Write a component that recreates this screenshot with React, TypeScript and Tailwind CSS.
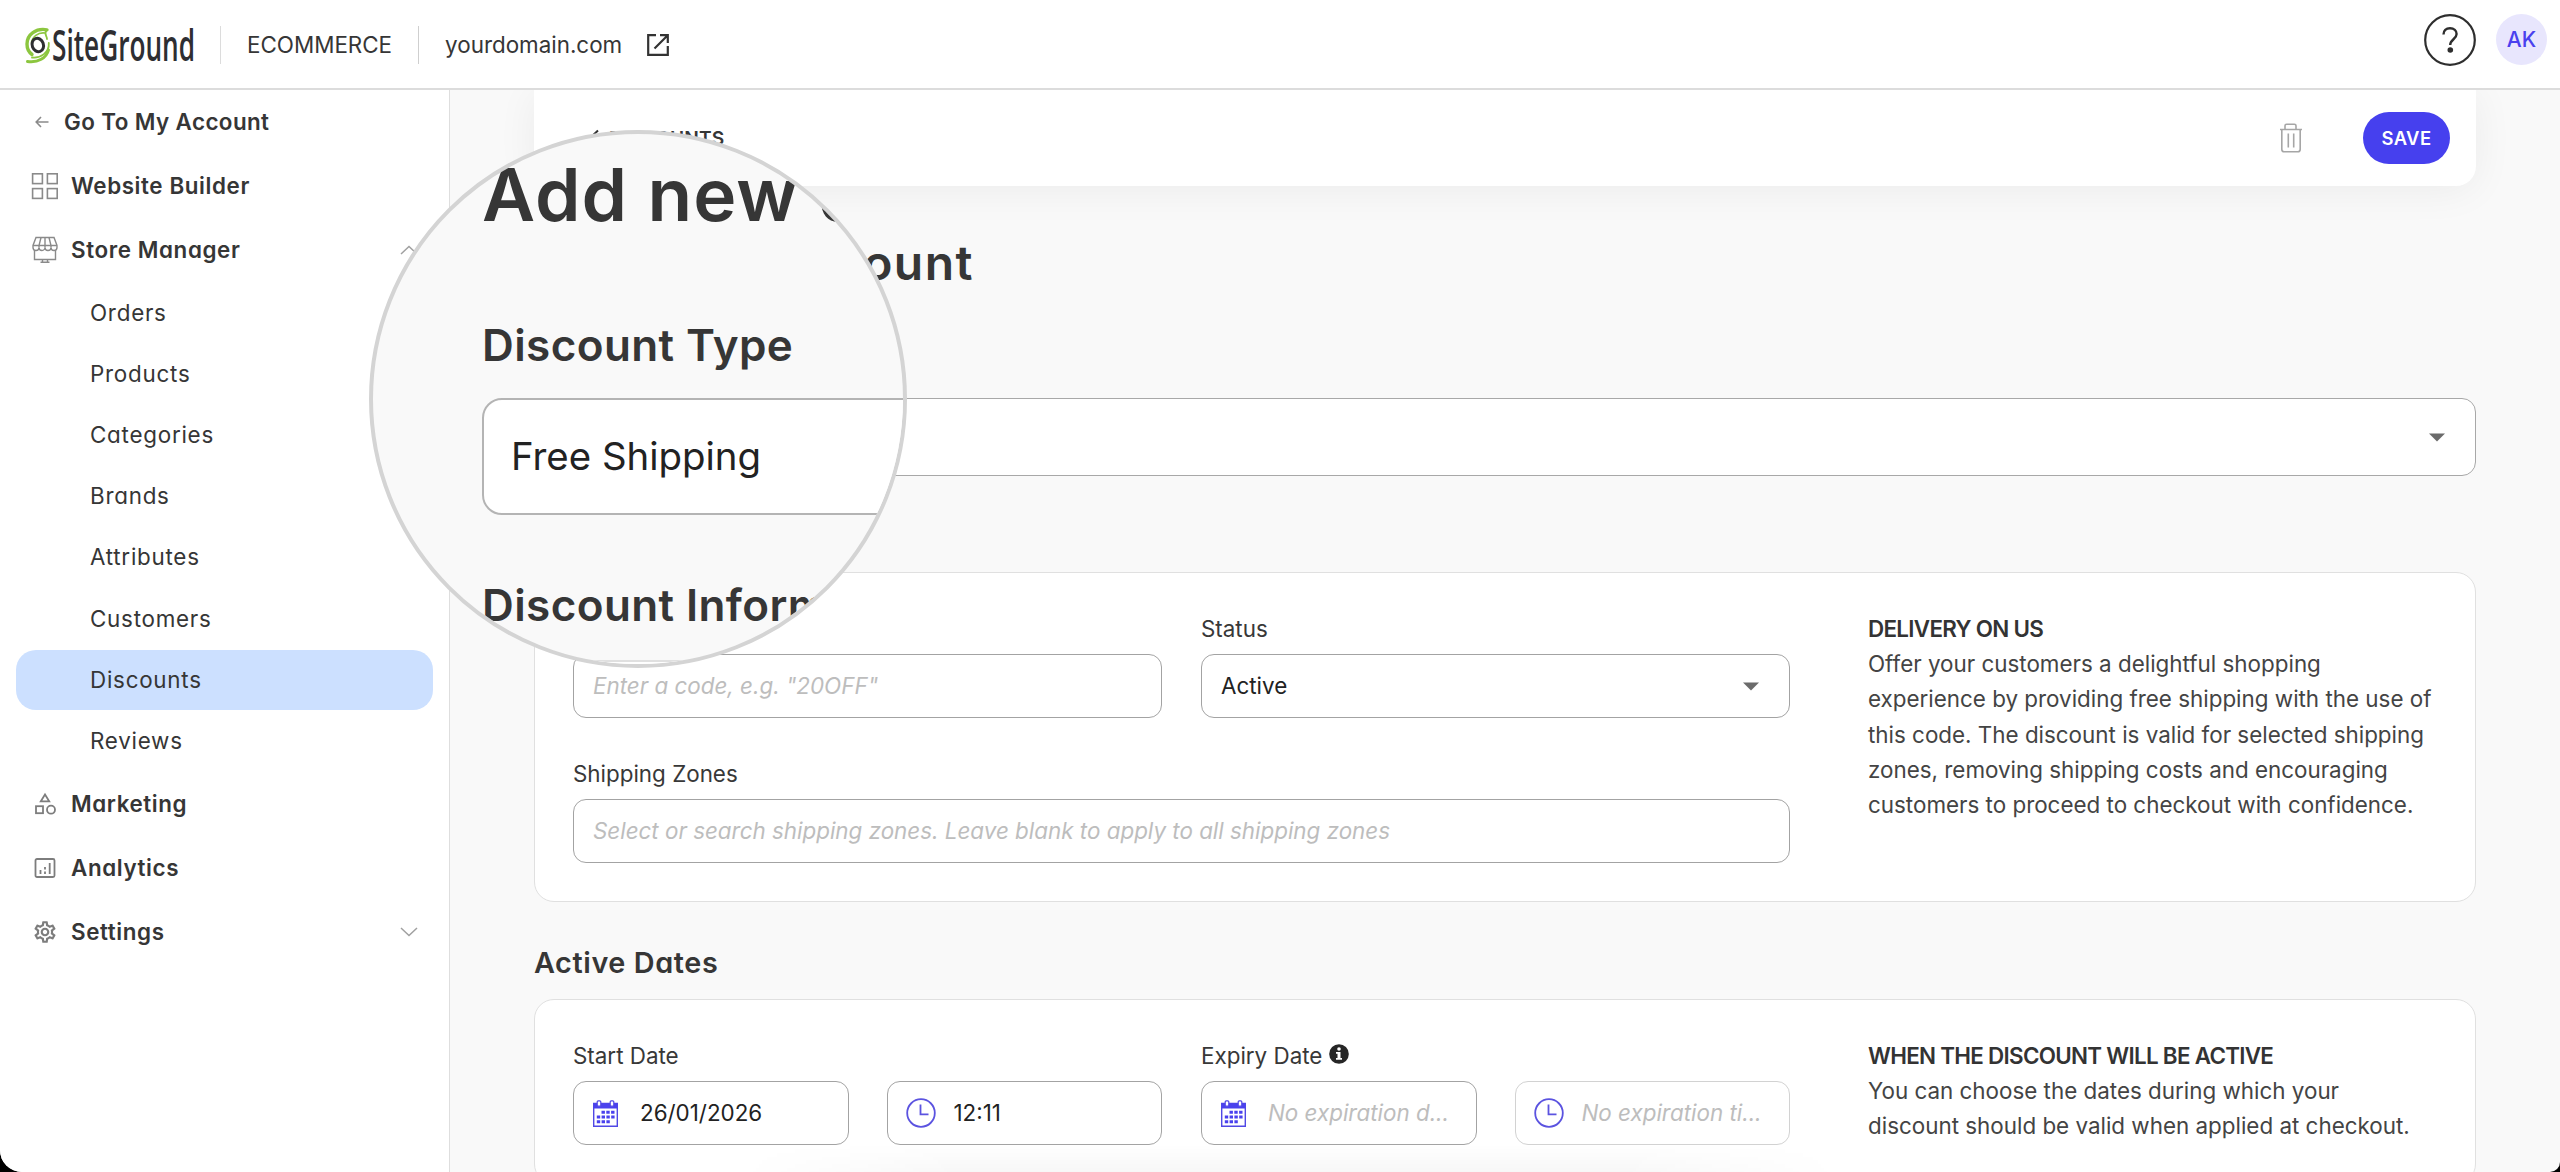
import type {ReactNode} from "react";
import {clsx} from "clsx";

const subItems = ['Orders', 'Products', 'Categories', 'Brands', 'Attributes', 'Customers', 'Discounts', 'Reviews']

function Logo() {
    return (
        <svg width="174" height="40" viewBox="0 0 174 40" fill="none" className="overflow-visible">
            <path d="M22 1.8C11 -0.2 2 6.5 2 16C2 20 3.5 24 7 26.5" stroke="#8cc63f" strokeWidth="3.4" strokeLinecap="round"/>
            <path d="M20 5C13 4 7 9 6.5 15" stroke="#8cc63f" strokeWidth="1.6" strokeLinecap="round"/>
            <path d="M21.5 2.5C18.5 5.5 22 8 22 11" stroke="#8cc63f" strokeWidth="1.8" strokeLinecap="round"/>
            <path d="M23.8 15C24.5 25 15 30.5 7 29.5" stroke="#8cc63f" strokeWidth="1.8" strokeLinecap="round"/>
            <path d="M23.5 22C21.5 30 13 35 2.5 33.5" stroke="#8cc63f" strokeWidth="3" strokeLinecap="round"/>
            <ellipse cx="12.8" cy="17" rx="5.6" ry="6.8" stroke="#2e2e32" strokeWidth="3" transform="rotate(-20 12.8 17)"/>
            <text x="27" y="33" fontFamily="'Open Sans', sans-serif" fontSize="43" fontWeight="600" fill="#2e2e32"
                  textLength="143" lengthAdjust="spacingAndGlyphs">SiteGround</text>
        </svg>
    )
}

function ExternalIcon() {
    return (
        <svg width="24" height="24" viewBox="0 0 24 24" fill="none" stroke="#333" strokeWidth="2.2">
            <path d="M10 2.2H2.2V21.8H21.8V13"/>
            <path d="M14 2.2H21.8V10M21.5 2.5L8.5 15.5"/>
        </svg>
    )
}

function BuilderIcon() {
    return (
        <svg width="28" height="28" viewBox="0 0 28 28" fill="none" stroke="#8a8a8a" strokeWidth="1.6">
            <rect x="1.6" y="1.8" width="9.8" height="9.8"/>
            <rect x="16.4" y="1.8" width="9.8" height="9.8"/>
            <rect x="1.6" y="16.6" width="9.8" height="9.8"/>
            <rect x="16.4" y="16.6" width="9.8" height="9.8"/>
        </svg>
    )
}

function StoreIcon() {
    return (
        <svg width="28" height="28" viewBox="0 0 28 28" fill="none" stroke="#8a8a8a" strokeWidth="1.4">
            <path d="M5 1.5H23L26 9.5V11.5A3 3 0 0 1 20 11.5A3 3 0 0 1 14 11.5A3 3 0 0 1 8 11.5A3 3 0 0 1 2 11.5V9.5Z"/>
            <path d="M2 9.5H26M10 1.5L8 9.5V11.5M14 1.5V11.5M18 1.5L20 9.5V11.5"/>
            <path d="M3.5 14V23.5H24.5V14M11.5 23.5V26M16.5 23.5V26M9.5 26.3H18.5"/>
        </svg>
    )
}

function MarketingIcon() {
    return (
        <svg width="28" height="28" viewBox="0 0 28 28" fill="none" stroke="#7d7d7d" strokeWidth="1.8">
            <path d="M14 4.5L18.2 11.3H9.8Z"/>
            <rect x="5" y="16.2" width="7" height="7"/>
            <circle cx="20" cy="19.7" r="4"/>
        </svg>
    )
}

function AnalyticsIcon() {
    return (
        <svg width="28" height="28" viewBox="0 0 28 28" fill="none" stroke="#7d7d7d" strokeWidth="1.8">
            <rect x="4.5" y="5" width="19" height="18" rx="1.5"/>
            <path d="M9.5 16V20M14 17.5V20M14 13V15.5M18.7 9V20"/>
        </svg>
    )
}

function SettingsIcon() {
    return (
        <svg width="26" height="26" viewBox="0 0 24 24" fill="#7d7d7d">
            <path
                d="M19.43 12.98c.04-.32.07-.64.07-.98 0-.34-.03-.66-.07-.98l2.11-1.65c.19-.15.24-.42.12-.64l-2-3.46c-.09-.16-.26-.25-.44-.25-.06 0-.12.01-.17.03l-2.49 1c-.52-.4-1.08-.73-1.69-.98l-.38-2.65C14.46 2.18 14.25 2 14 2h-4c-.25 0-.46.18-.49.42l-.38 2.65c-.61.25-1.17.59-1.69.98l-2.49-1c-.06-.02-.12-.03-.18-.03-.17 0-.34.09-.43.25l-2 3.46c-.13.22-.07.49.12.64l2.11 1.65c-.04.32-.07.65-.07.98 0 .33.03.66.07.98l-2.11 1.65c-.19.15-.24.42-.12.64l2 3.46c.09.16.26.25.44.25.06 0 .12-.01.17-.03l2.49-1c.52.4 1.08.73 1.69.98l.38 2.65c.03.24.24.42.49.42h4c.25 0 .46-.18.49-.42l.38-2.65c.61-.25 1.17-.59 1.69-.98l2.49 1c.06.02.12.03.18.03.17 0 .34-.09.43-.25l2-3.46c.12-.22.07-.49-.12-.64l-2.11-1.65zm-1.98-1.71c.04.31.05.52.05.73 0 .21-.02.43-.05.73l-.14 1.13.89.7 1.08.84-.7 1.21-1.27-.51-1.04-.42-.9.68c-.43.32-.84.56-1.25.73l-1.06.43-.16 1.13-.2 1.35h-1.4l-.19-1.35-.16-1.13-1.06-.43c-.43-.18-.83-.41-1.23-.71l-.91-.7-1.06.43-1.27.51-.7-1.21 1.08-.84.89-.7-.14-1.13c-.03-.31-.05-.54-.05-.74s.02-.43.05-.73l.14-1.13-.89-.7-1.08-.84.7-1.21 1.27.51 1.04.42.9-.68c.43-.32.84-.56 1.25-.73l1.06-.43.16-1.13.2-1.35h1.39l.19 1.35.16 1.13 1.06.43c.43.18.83.41 1.23.71l.91.7 1.06-.43 1.27-.51.7 1.21-1.07.85-.89.7.14 1.13zM12 8c-2.21 0-4 1.79-4 4s1.79 4 4 4 4-1.79 4-4-1.79-4-4-4zm0 6c-1.1 0-2-.9-2-2s.9-2 2-2 2 .9 2 2-.9 2-2 2z"/>
        </svg>
    )
}

function TrashIcon() {
    return (
        <svg width="24" height="30" viewBox="0 0 24 30" fill="none" stroke="#a6a6a6" strokeWidth="1.6">
            <path d="M1 6.5H23M6 6V2.8Q6 1.2 7.6 1.2H15.4Q17 1.2 17 2.8V6"/>
            <path d="M2.8 6.5V26.2Q2.8 28.8 5.2 28.8H18.8Q21.2 28.8 21.2 26.2V6.5M9.3 10.5V24.5M14.7 10.5V24.5"/>
        </svg>
    )
}

function HelpIcon() {
    return (
        <svg width="52" height="52" viewBox="0 0 52 52" fill="none">
            <circle cx="26" cy="26" r="24.8" stroke="#2e2e2e" strokeWidth="2.2"/>
            <path d="M19.5 20.5C19.5 16.5 22 14.2 26 14.2C30 14.2 32.6 16.6 32.6 20C32.6 25.2 26.2 25.4 26.2 31"
                  stroke="#2e2e2e" strokeWidth="2.4"/>
            <circle cx="26.3" cy="36" r="2.8" fill="#2e2e2e"/>
        </svg>
    )
}

function CalendarIcon() {
    return (
        <svg width="25" height="27" viewBox="0 0 25 27" fill="none" className="shrink-0">
            <path d="M0.7 3.5H24.3V26.3H0.7Z" stroke="#5048e5" strokeWidth="1.4"/>
            <path d="M0.7 3.5H24.3V8.5H0.7Z" fill="#4a41ee"/>
            <rect x="4.2" y="0.8" width="3.6" height="5.4" rx="1" fill="#fff" stroke="#5048e5" strokeWidth="1.2"/>
            <rect x="17.2" y="0.8" width="3.6" height="5.4" rx="1" fill="#fff" stroke="#5048e5" strokeWidth="1.2"/>
            <path d="M8.5 12.3H21.8M3.8 17H21.8M3.8 21.8H17" stroke="#4a41ee" strokeWidth="3" strokeDasharray="3.4 1.4"/>
        </svg>
    )
}

function ClockIcon() {
    return (
        <svg width="30" height="30" viewBox="0 0 30 30" fill="none" stroke="#5b53e0" strokeWidth="1.8"
             className="-ml-px shrink-0">
            <circle cx="15" cy="15" r="13.8"/>
            <path d="M14.5 6.5V16.3H22.5"/>
        </svg>
    )
}

function InfoIcon() {
    return (
        <svg width="20" height="20" viewBox="0 0 20 20">
            <circle cx="10" cy="10" r="9.8" fill="#262626"/>
            <circle cx="10" cy="5" r="1.8" fill="#fff"/>
            <path d="M7 8H11.5V14H13V15.8H7V14H8.5V9.8H7Z" fill="#fff"/>
        </svg>
    )
}

function Caret() {
    return (
        <svg width="16" height="9" viewBox="0 0 16 9" fill="#6b6b6b">
            <path d="M0 0.5H16L8 8.5Z"/>
        </svg>
    )
}

function Chevron({up}: { up?: boolean }) {
    return (
        <svg width="18" height="10" viewBox="0 0 18 10" fill="none" stroke="#a0a0a0" strokeWidth="1.5"
             className={clsx(up && 'rotate-180')}>
            <path d="M1 1L9 8.5L17 1"/>
        </svg>
    )
}

function NavItem({icon, label, children}: { icon: ReactNode, label: string, children?: ReactNode }) {
    return (
        <div className="flex h-16 items-center pr-[31px] pl-[31px]">
            <span className="flex w-7 justify-center">{icon}</span>
            <span className="ml-3 flex-1 font-semibold tracking-[0.6px]">{label}</span>
            {children}
        </div>
    )
}

function Field({children, faded, className}: { children: ReactNode, faded?: boolean, className?: string }) {
    return (
        <div className={clsx('flex h-16 items-center rounded-[13px] border bg-white px-[19px] text-[#222]',
            faded ? 'border-[#d2d2d2]' : 'border-[#a3a3a3]', className)}>
            {children}
        </div>
    )
}

function Label({children}: { children?: ReactNode }) {
    return <div className="mb-[9px] flex h-8 items-center gap-2 text-[#383838]">{children}</div>
}

function Placeholder({children}: { children: ReactNode }) {
    return <span className="whitespace-nowrap text-[#bdbdbd] italic">{children}</span>
}

function Card({children, title, text}: { children: ReactNode, title: string, text: ReactNode }) {
    return (
        <section
            className="flex rounded-[20px] border border-[#e0e0e0] bg-white px-[38px] pt-10 pb-[38px]">
            <div className="w-[1217px]">{children}</div>
            <div className="-mt-[2px] ml-[78px] leading-[35.2px] text-[#444]">
                <h3 className="font-semibold tracking-[-0.7px] text-[#333]">{title}</h3>
                <p className="whitespace-nowrap">{text}</p>
            </div>
        </section>
    )
}

// Round lens that repeats the top of the form at one and a half times its size
function Magnifier() {
    return (
        <div
            className="absolute top-[130px] left-[369px] size-[538px] overflow-hidden rounded-full border-4 border-[#d4d4d4] bg-[#f9f9f9] font-['Inter',sans-serif]">
            <div className="ml-[109px] w-[900px] pt-[17px] font-semibold whitespace-nowrap text-[#363636] [font-feature-settings:'cv11']">
                <div className="text-[73px] leading-[88px] tracking-[1px]">Add new discount</div>
                <div className="mt-[76px] text-[44px] leading-[60px] tracking-[0.4px]">Discount Type</div>
                <div
                    className="mt-[23px] flex h-[117px] items-center rounded-[20px] border-2 border-[#b4b4b4] bg-white pl-[27px] text-[38.4px] font-normal text-[#222] [font-feature-settings:normal]">
                    Free Shipping
                </div>
                <div className="mt-[60px] text-[44px] leading-[60px] tracking-[0.4px]">Discount Information</div>
                <div className="mt-[25px] h-20 rounded-[30px] border-2 border-[#e0e0e0] bg-white"/>
            </div>
        </div>
    )
}

export default function App() {
    return (
        <div className="relative h-[1172px] w-[2560px] overflow-hidden bg-black">
            <div
                className="flex h-full flex-col overflow-hidden rounded-br-[10px] rounded-bl-[22px] bg-[#f9f9f9] font-['Inter',sans-serif] text-[22.4px] leading-[32px] text-[#363636]">
                {/* Top bar */}
                <header
                    className="relative z-10 flex h-[90px] shrink-0 items-center border-b-2 border-[#dcdcdc] bg-white pt-[2px] pl-[25px]">
                    <span className="pt-[5px]"><Logo/></span>
                    <div className="ml-[21px] h-[38px] w-px bg-[#dcdcdc]"/>
                    <span className="ml-[26px]">ECOMMERCE</span>
                    <div className="ml-[26px] h-[38px] w-px bg-[#cfcfcf]"/>
                    <span className="ml-[26px]">yourdomain.com</span>
                    <span className="ml-[24px]"><ExternalIcon/></span>
                    <div className="ml-auto flex items-center gap-5 pr-[13px] pb-[11px]">
                        <HelpIcon/>
                        <div
                            className="flex size-[51px] items-center justify-center rounded-full bg-[#e8e6fd] text-[21px] font-medium text-[#4a41ee]">AK
                        </div>
                    </div>
                </header>

                <div className="flex min-h-0 flex-1">
                    {/* Sidebar */}
                    <nav
                        className="w-[450px] shrink-0 border-r border-[#dedede] bg-white [font-feature-settings:'cv11']">
                        <div className="flex h-16 items-center pl-[35px]">
                            <svg width="14" height="12" viewBox="0 0 14 12" fill="none" stroke="#8a8a8a" strokeWidth="1.6">
                                <path d="M13.5 6H1.5M6 1L1.2 6L6 11"/>
                            </svg>
                            <span className="ml-[15px] font-semibold tracking-[0.4px]">Go To My Account</span>
                        </div>
                        <NavItem icon={<BuilderIcon/>} label="Website Builder"/>
                        <NavItem icon={<StoreIcon/>} label="Store Manager"><Chevron up/></NavItem>
                        {subItems.map((item) => (
                            <div key={item} className="flex h-[61.2px] items-center px-4">
                                <div
                                    className={clsx('flex h-[60px] flex-1 items-center rounded-[20px] pl-[74px] tracking-[0.75px]', item === 'Discounts' && 'bg-[#cce0ff]')}>
                                    {item}
                                </div>
                            </div>
                        ))}
                        <NavItem icon={<MarketingIcon/>} label="Marketing"/>
                        <NavItem icon={<AnalyticsIcon/>} label="Analytics"/>
                        <NavItem icon={<SettingsIcon/>} label="Settings"><Chevron/></NavItem>
                    </nav>

                    {/* Page */}
                    <main className="min-w-0 flex-1 pr-[84px] pl-[84px]">
                        <div
                            className="flex h-24 items-center rounded-b-[20px] bg-white pr-[26px] pl-[54px] shadow-[0_4px_40px_rgba(0,0,0,0.06)]">
                            <svg width="14" height="18" viewBox="0 0 14 18" fill="none" stroke="#333" strokeWidth="2">
                                <path d="M10 1.5L2 9L10 16.5"/>
                            </svg>
                            <span className="ml-[7px] text-[19.2px] font-semibold tracking-[0.1px]">DISCOUNTS</span>
                            <span className="ml-auto"><TrashIcon/></span>
                            <button
                                className="ml-[60px] h-[52px] w-[87px] rounded-full bg-[#4640ee] text-[18.4px] font-semibold tracking-[0.4px] text-white">SAVE
                            </button>
                        </div>

                        <h1 className="mt-[47px] text-[48px] leading-[60px] font-semibold tracking-[1.4px] [font-feature-settings:'cv11']">Add
                            new discount</h1>

                        <div
                            className="mt-[105px] flex h-[78px] items-center justify-end rounded-[14px] border border-[#a8a8a8] bg-white pr-[30px]">
                            <Caret/>
                        </div>

                        <div className="h-24"/>
                        <Card title="DELIVERY ON US"
                              text={<>Offer your customers a delightful shopping<br/>experience by providing free
                                  shipping with the use of<br/>this code. The discount is valid for selected
                                  shipping<br/>zones, removing shipping costs and encouraging<br/>customers to proceed
                                  to checkout with confidence.</>}>
                            <div className="grid grid-cols-2 gap-x-[39px]">
                                <div>
                                    <Label/>
                                    <Field><Placeholder>Enter a code, e.g. "20OFF"</Placeholder></Field>
                                </div>
                                <div>
                                    <Label>Status</Label>
                                    <Field className="justify-between pr-[30px]!">Active<Caret/></Field>
                                </div>
                                <div className="col-span-2 mt-10">
                                    <Label>Shipping Zones</Label>
                                    <Field><Placeholder>Select or search shipping zones. Leave blank to apply to all
                                        shipping zones</Placeholder></Field>
                                </div>
                            </div>
                        </Card>

                        <h2 className="mt-[41px] mb-4 text-[28.8px] leading-10 font-semibold tracking-[0.6px] [font-feature-settings:'cv11']">Active
                            Dates</h2>
                        <Card title="WHEN THE DISCOUNT WILL BE ACTIVE"
                              text={<>You can choose the dates during which your<br/>discount should be valid when
                                  applied at checkout.</>}>
                            <div className="grid grid-cols-2 gap-x-[39px]">
                                <div>
                                    <Label>Start Date</Label>
                                    <div className="grid grid-cols-2 gap-[38px]">
                                        <Field className="gap-[22px]"><CalendarIcon/>26/01/2026</Field>
                                        <Field className="gap-[18px]"><ClockIcon/>12:11</Field>
                                    </div>
                                </div>
                                <div>
                                    <Label>Expiry Date <span className="-mt-1 -ml-px"><InfoIcon/></span></Label>
                                    <div className="grid grid-cols-2 gap-[38px]">
                                        <Field className="gap-[22px]"><CalendarIcon/><Placeholder>No expiration
                                            d...</Placeholder></Field>
                                        <Field className="gap-[18px]" faded><ClockIcon/><Placeholder>No expiration
                                            ti...</Placeholder></Field>
                                    </div>
                                </div>
                            </div>
                        </Card>
                    </main>
                </div>
            </div>

            <div className="absolute bottom-0 left-[740px] h-7 w-[1100px] bg-linear-to-t from-black/[0.03] to-transparent mask-x-from-80% mask-x-to-100%"/>
            <Magnifier/>
        </div>
    );
}
